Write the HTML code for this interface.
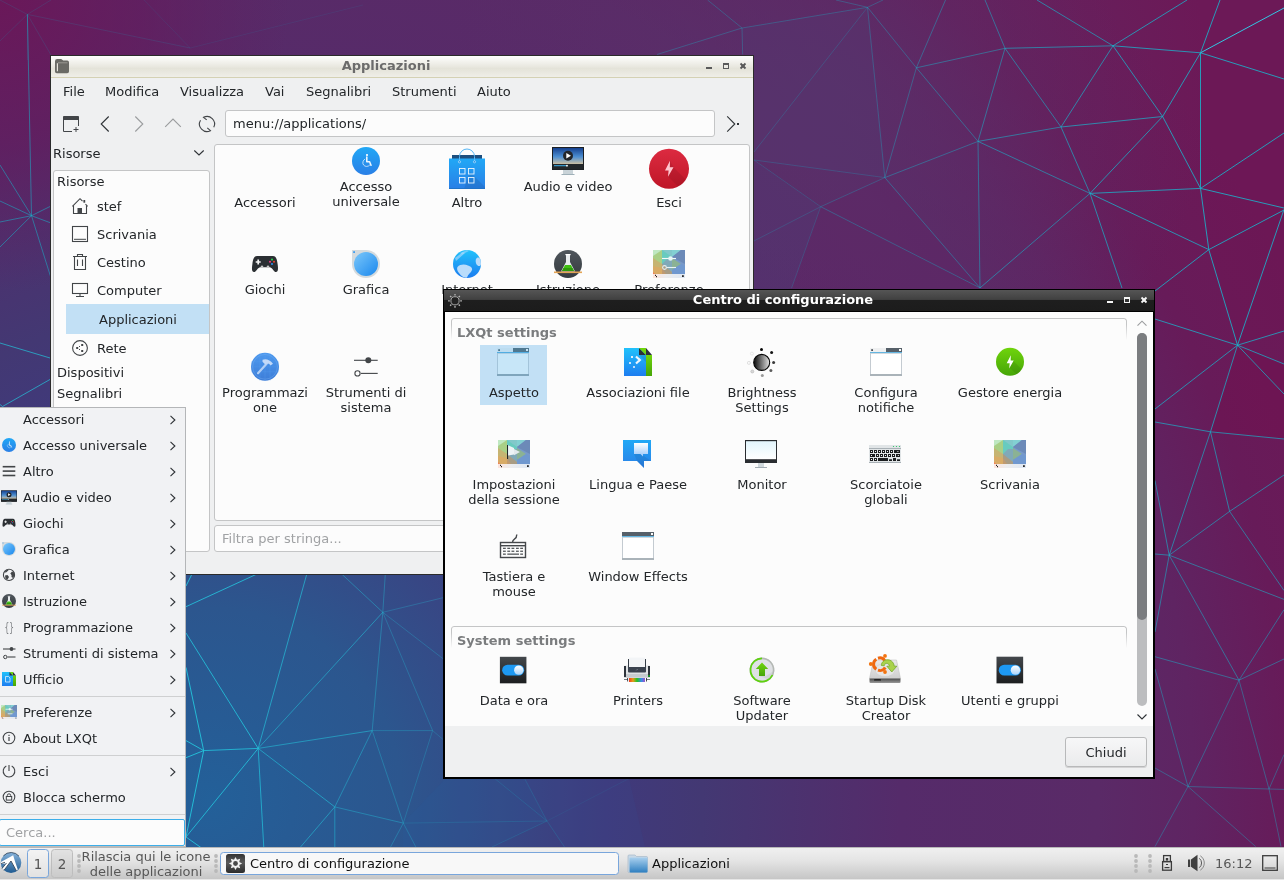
<!DOCTYPE html>
<html><head><meta charset="utf-8"><title>LXQt</title>
<style>
*{box-sizing:border-box;margin:0;padding:0}
html,body{width:1284px;height:880px;overflow:hidden}
body{font-family:"DejaVu Sans","Liberation Sans",sans-serif;font-size:13px;color:#232629;background:#5a2a66;position:relative}
svg{position:absolute;overflow:visible}
#wall{left:0;top:0;width:1284px;height:880px}
#w1,#w2,#menu,#panel{will-change:transform}
.t{position:absolute;white-space:nowrap;line-height:16px;height:16px}
.c{position:absolute;white-space:nowrap;line-height:15px;text-align:center;width:124px}
#w1{position:absolute;left:51px;top:56px;width:702px;height:518px;background:#eff0f1;overflow:hidden;outline:1px solid #2b2b2b}
#w1 .tb{position:absolute;left:0;top:0;width:100%;height:22px;background:linear-gradient(#fefefd,#e9e8e0 50%,#e4e3d9 60%,#efeee8);border-bottom:1px solid #d4d1b4}
#w1 .tt{position:absolute;left:0;top:2px;width:670px;text-align:center;font-weight:bold;color:#6b6b6b}
.pn{position:absolute;background:#fcfcfc;border:1px solid #c4c5c6;border-radius:3px}
#w2{position:absolute;left:443px;top:289px;width:712px;height:490px;background:#000}
#w2 .tb{position:absolute;left:1px;top:1px;width:710px;height:21px;background:linear-gradient(#555,#414141 45%,#1e1e1e 50%,#1c1c1c)}
#w2 .tt{position:absolute;left:0;top:2px;width:678px;text-align:center;font-weight:bold;color:#fff}
#w2 .body{position:absolute;left:2px;top:23px;width:708px;height:465px;background:#eff0f1}
#w2 .view{position:absolute;left:0;top:0;width:708px;height:414px;background:#fcfcfc}
.gb{position:absolute;left:6px;width:676px;height:22px;border:1px solid #c4c5c6;border-bottom:none;border-radius:3px 3px 0 0;-webkit-mask-image:linear-gradient(#000 30%,transparent);mask-image:linear-gradient(#000 30%,transparent)}
.gh{position:absolute;font-weight:bold;color:#7a7c7e;left:12px;line-height:16px}
#menu{position:absolute;left:0;top:407px;width:186px;height:440px;background:#f1f2f4;box-shadow:inset 0 1px 0 #b4b6b8,inset -1px 0 0 #b4b6b8,inset 0 -1px 0 #bdbcba}
.sep{position:absolute;left:0;width:185px;height:1px;background:#cfd0d1}
#panel{position:absolute;left:0;top:847px;width:1284px;height:33px;background:linear-gradient(#b8b8b8 0,#b8b8b8 1px,#f0f0f0 1px,#e4e4e4 14px,#c6c6c6 32px,#e6e6e6 32px)}
</style></head><body>
<svg id="wall" viewBox="0 0 1284 880">
<defs>
<radialGradient id="wb" cx="210" cy="800" r="1200" gradientUnits="userSpaceOnUse"><stop offset="0" stop-color="#236099"/><stop offset=".07" stop-color="#275b94"/><stop offset=".16" stop-color="#2c568e"/><stop offset=".24" stop-color="#364986"/><stop offset=".33" stop-color="#3f3a7c"/><stop offset=".41" stop-color="#433873"/><stop offset=".575" stop-color="#552b6a"/><stop offset=".74" stop-color="#5a2a67"/><stop offset=".82" stop-color="#5f2462"/><stop offset=".9" stop-color="#671b59"/><stop offset="1" stop-color="#6c1957"/></radialGradient>
<radialGradient id="wm" cx="0" cy="0" r="290" gradientUnits="userSpaceOnUse"><stop offset="0" stop-color="#6a1859"/><stop offset=".5" stop-color="#66195b" stop-opacity=".6"/><stop offset="1" stop-color="#621c5d" stop-opacity="0"/></radialGradient>
<radialGradient id="wp" cx="830" cy="90" r="380" gradientUnits="userSpaceOnUse"><stop offset="0" stop-color="#59316a" stop-opacity=".75"/><stop offset="1" stop-color="#59316a" stop-opacity="0"/></radialGradient>
</defs>
<rect width="1284" height="880" fill="url(#wb)"/>
<rect width="1284" height="880" fill="url(#wm)"/>
<rect width="1284" height="880" fill="url(#wp)"/>
<polygon points="445,779 524.6,778.5 547,821 492,847 403,847 403,823" fill="#2a5c9a" opacity=".22"/>
<polygon points="524.6,778.5 629,778.5 645,847 564.5,847 547,821" fill="#37488a" opacity=".25"/>
<polygon points="1237.5,345.2 1284,364 1284,439 1210.5,431.8" fill="#74104e" opacity=".4"/>
<polygon points="1200.5,52.8 1284,8 1284,133 1200.5,188.4" fill="#6e1655" opacity=".3"/>
<polygon points="1200.5,188.4 1284,133 1284,209.5 1208.8,249.6" fill="#6e1554" opacity=".25"/>
<polygon points="1208.8,249.6 1284,209.5 1284,331 1237.5,345.2" fill="#6e1453" opacity=".3"/>
<polygon points="742,28 867.5,7.3 884.8,177.6 754,160" fill="#523c74" opacity=".3"/>
<polygon points="884.8,177.6 980,287.9 820.7,206.7" fill="#632062" opacity=".3"/>
<polygon points="820.7,206.7 980,287.9 980,300 791.6,288" fill="#632062" opacity=".3"/>
<polygon points="754,160 820.7,206.7 791.6,288 750,300 750,160" fill="#4f3c76" opacity=".3"/>
<g stroke-width="1" fill="none">
<line x1="867.5" y1="7.3" x2="916.4" y2="67.8" stroke="#16bcd2" stroke-opacity="0.34"/>
<line x1="867.5" y1="7.3" x2="884.8" y2="177.6" stroke="#16bcd2" stroke-opacity="0.31"/>
<line x1="867.5" y1="7.3" x2="754" y2="152" stroke="#16bcd2" stroke-opacity="0.22"/>
<line x1="916.4" y1="67.8" x2="1005" y2="48.3" stroke="#16bcd2" stroke-opacity="0.44"/>
<line x1="916.4" y1="67.8" x2="884.8" y2="177.6" stroke="#16bcd2" stroke-opacity="0.35"/>
<line x1="916.4" y1="67.8" x2="978" y2="141.4" stroke="#16bcd2" stroke-opacity="0.42"/>
<line x1="916.4" y1="67.8" x2="945.5" y2="0" stroke="#16bcd2" stroke-opacity="0.4"/>
<line x1="1005" y1="48.3" x2="985" y2="0" stroke="#16bcd2" stroke-opacity="0.49"/>
<line x1="1005" y1="48.3" x2="1113" y2="45.8" stroke="#16bcd2" stroke-opacity="0.59"/>
<line x1="1005" y1="48.3" x2="978" y2="141.4" stroke="#16bcd2" stroke-opacity="0.49"/>
<line x1="1005" y1="48.3" x2="1061" y2="127" stroke="#16bcd2" stroke-opacity="0.55"/>
<line x1="1113" y1="45.8" x2="1037" y2="0" stroke="#16bcd2" stroke-opacity="0.61"/>
<line x1="1113" y1="45.8" x2="1187" y2="0" stroke="#16bcd2" stroke-opacity="0.73"/>
<line x1="1113" y1="45.8" x2="1200.5" y2="52.8" stroke="#16bcd2" stroke-opacity="0.74"/>
<line x1="1113" y1="45.8" x2="1061" y2="127" stroke="#16bcd2" stroke-opacity="0.63"/>
<line x1="1113" y1="45.8" x2="1162.6" y2="116.5" stroke="#16bcd2" stroke-opacity="0.71"/>
<line x1="1200.5" y1="52.8" x2="1220" y2="0" stroke="#16bcd2" stroke-opacity="0.8"/>
<line x1="1200.5" y1="52.8" x2="1284" y2="79" stroke="#16bcd2" stroke-opacity="0.8"/>
<line x1="1200.5" y1="52.8" x2="1162.6" y2="116.5" stroke="#16bcd2" stroke-opacity="0.77"/>
<line x1="1200.5" y1="52.8" x2="1200.5" y2="188.4" stroke="#16bcd2" stroke-opacity="0.8"/>
<line x1="978" y1="141.4" x2="1061" y2="127" stroke="#16bcd2" stroke-opacity="0.53"/>
<line x1="978" y1="141.4" x2="884.8" y2="177.6" stroke="#16bcd2" stroke-opacity="0.4"/>
<line x1="978" y1="141.4" x2="1090" y2="193.4" stroke="#16bcd2" stroke-opacity="0.55"/>
<line x1="978" y1="141.4" x2="980" y2="287.9" stroke="#16bcd2" stroke-opacity="0.47"/>
<line x1="1061" y1="127" x2="1162.6" y2="116.5" stroke="#16bcd2" stroke-opacity="0.67"/>
<line x1="1061" y1="127" x2="1090" y2="193.4" stroke="#16bcd2" stroke-opacity="0.61"/>
<line x1="1162.6" y1="116.5" x2="1090" y2="193.4" stroke="#16bcd2" stroke-opacity="0.69"/>
<line x1="1162.6" y1="116.5" x2="1200.5" y2="188.4" stroke="#16bcd2" stroke-opacity="0.77"/>
<line x1="884.8" y1="177.6" x2="820.7" y2="206.7" stroke="#16bcd2" stroke-opacity="0.28"/>
<line x1="884.8" y1="177.6" x2="980" y2="287.9" stroke="#16bcd2" stroke-opacity="0.4"/>
<line x1="884.8" y1="177.6" x2="754" y2="160" stroke="#16bcd2" stroke-opacity="0.23"/>
<line x1="1090" y1="193.4" x2="1200.5" y2="188.4" stroke="#16bcd2" stroke-opacity="0.72"/>
<line x1="1090" y1="193.4" x2="980" y2="287.9" stroke="#16bcd2" stroke-opacity="0.55"/>
<line x1="1090" y1="193.4" x2="1208.8" y2="249.6" stroke="#16bcd2" stroke-opacity="0.72"/>
<line x1="1090" y1="193.4" x2="1122" y2="288" stroke="#16bcd2" stroke-opacity="0.66"/>
<line x1="1200.5" y1="188.4" x2="1208.8" y2="249.6" stroke="#16bcd2" stroke-opacity="0.8"/>
<line x1="1200.5" y1="188.4" x2="1284" y2="133" stroke="#16bcd2" stroke-opacity="0.8"/>
<line x1="1200.5" y1="188.4" x2="1284" y2="208" stroke="#16bcd2" stroke-opacity="0.8"/>
<line x1="820.7" y1="206.7" x2="980" y2="287.9" stroke="#16bcd2" stroke-opacity="0.35"/>
<line x1="820.7" y1="206.7" x2="754" y2="160" stroke="#16bcd2" stroke-opacity="0.2"/>
<line x1="820.7" y1="206.7" x2="750" y2="243" stroke="#16bcd2" stroke-opacity="0.2"/>
<line x1="820.7" y1="206.7" x2="791.6" y2="288" stroke="#16bcd2" stroke-opacity="0.21"/>
<line x1="1208.8" y1="249.6" x2="1284" y2="210" stroke="#16bcd2" stroke-opacity="0.8"/>
<line x1="1208.8" y1="249.6" x2="1155" y2="291" stroke="#16bcd2" stroke-opacity="0.77"/>
<line x1="1208.8" y1="249.6" x2="1237.5" y2="345.2" stroke="#16bcd2" stroke-opacity="0.8"/>
<line x1="1237.5" y1="345.2" x2="1284" y2="209.5" stroke="#16bcd2" stroke-opacity="0.8"/>
<line x1="1200.5" y1="52.8" x2="1284" y2="8" stroke="#2fd0ea" stroke-opacity="0.95"/>
<line x1="867.5" y1="7.3" x2="742" y2="28" stroke="#16bcd2" stroke-opacity="0.3"/>
<line x1="867.5" y1="7.3" x2="836" y2="0" stroke="#16bcd2" stroke-opacity="0.3"/>
<line x1="867.5" y1="7.3" x2="883" y2="0" stroke="#16bcd2" stroke-opacity="0.3"/>
<line x1="742" y1="28" x2="707.6" y2="0" stroke="#16bcd2" stroke-opacity="0.3"/>
<line x1="742" y1="28" x2="657" y2="54.5" stroke="#16bcd2" stroke-opacity="0.3"/>
<line x1="742" y1="28" x2="742.7" y2="54.5" stroke="#16bcd2" stroke-opacity="0.3"/>
<line x1="27.4" y1="14.4" x2="190.2" y2="48" stroke="#2e7fa6" stroke-opacity="0.22"/>
<line x1="27.4" y1="14.4" x2="0" y2="0" stroke="#2e7fa6" stroke-opacity="0.22"/>
<line x1="27.4" y1="14.4" x2="51" y2="0" stroke="#2e7fa6" stroke-opacity="0.22"/>
<line x1="27.4" y1="14.4" x2="0" y2="41" stroke="#2e7fa6" stroke-opacity="0.22"/>
<line x1="27.4" y1="14.4" x2="27.4" y2="60" stroke="#2e7fa6" stroke-opacity="0.22"/>
<line x1="27.4" y1="14.4" x2="51" y2="55" stroke="#2e7fa6" stroke-opacity="0.22"/>
<line x1="190.2" y1="48" x2="144" y2="0" stroke="#2e7fa6" stroke-opacity="0.15"/>
<line x1="190.2" y1="48" x2="363" y2="5" stroke="#2e7fa6" stroke-opacity="0.15"/>
<line x1="31.5" y1="215.7" x2="27.4" y2="14.4" stroke="#16bcd2" stroke-opacity="0.5"/>
<line x1="31.5" y1="215.7" x2="51" y2="206" stroke="#16bcd2" stroke-opacity="0.5"/>
<line x1="31.5" y1="215.7" x2="51" y2="223" stroke="#16bcd2" stroke-opacity="0.5"/>
<line x1="31.5" y1="215.7" x2="51" y2="278" stroke="#16bcd2" stroke-opacity="0.5"/>
<line x1="31.5" y1="215.7" x2="0" y2="165" stroke="#16bcd2" stroke-opacity="0.5"/>
<line x1="31.5" y1="215.7" x2="0" y2="201" stroke="#16bcd2" stroke-opacity="0.5"/>
<line x1="31.5" y1="215.7" x2="0" y2="222" stroke="#16bcd2" stroke-opacity="0.5"/>
<line x1="31.5" y1="215.7" x2="0" y2="247" stroke="#16bcd2" stroke-opacity="0.5"/>
<line x1="0" y1="343" x2="51" y2="358.3" stroke="#24c4dc" stroke-opacity="0.7"/>
<line x1="2.5" y1="406.5" x2="51" y2="378.9" stroke="#24c4dc" stroke-opacity="0.7"/>
<line x1="2.5" y1="406.5" x2="0" y2="404.5" stroke="#24c4dc" stroke-opacity="0.7"/>
<line x1="1237.5" y1="345.2" x2="1284" y2="331" stroke="#16bcd2" stroke-opacity="0.72"/>
<line x1="1237.5" y1="345.2" x2="1284" y2="364" stroke="#16bcd2" stroke-opacity="0.71"/>
<line x1="1237.5" y1="345.2" x2="1284" y2="394" stroke="#16bcd2" stroke-opacity="0.69"/>
<line x1="1237.5" y1="345.2" x2="1155" y2="319" stroke="#16bcd2" stroke-opacity="0.72"/>
<line x1="1237.5" y1="345.2" x2="1155" y2="409" stroke="#16bcd2" stroke-opacity="0.69"/>
<line x1="1237.5" y1="345.2" x2="1210.5" y2="431.8" stroke="#16bcd2" stroke-opacity="0.68"/>
<line x1="1210.5" y1="431.8" x2="1155" y2="422" stroke="#16bcd2" stroke-opacity="0.65"/>
<line x1="1210.5" y1="431.8" x2="1284" y2="439" stroke="#16bcd2" stroke-opacity="0.64"/>
<line x1="1210.5" y1="431.8" x2="1229.6" y2="511.4" stroke="#16bcd2" stroke-opacity="0.61"/>
<line x1="1210.5" y1="431.8" x2="1169.2" y2="555.2" stroke="#16bcd2" stroke-opacity="0.6"/>
<line x1="1229.6" y1="511.4" x2="1284" y2="475" stroke="#16bcd2" stroke-opacity="0.6"/>
<line x1="1229.6" y1="511.4" x2="1169.2" y2="555.2" stroke="#16bcd2" stroke-opacity="0.56"/>
<line x1="1229.6" y1="511.4" x2="1284" y2="590.5" stroke="#16bcd2" stroke-opacity="0.55"/>
<line x1="1169.2" y1="555.2" x2="1155" y2="480.5" stroke="#16bcd2" stroke-opacity="0.58"/>
<line x1="1169.2" y1="555.2" x2="1155" y2="554" stroke="#16bcd2" stroke-opacity="0.55"/>
<line x1="1169.2" y1="555.2" x2="1284" y2="599.4" stroke="#16bcd2" stroke-opacity="0.53"/>
<line x1="1169.2" y1="555.2" x2="1239" y2="680.2" stroke="#16bcd2" stroke-opacity="0.5"/>
<line x1="1169.2" y1="555.2" x2="1155" y2="632" stroke="#16bcd2" stroke-opacity="0.52"/>
<line x1="1239" y1="680.2" x2="1284" y2="609.7" stroke="#16bcd2" stroke-opacity="0.47"/>
<line x1="1239" y1="680.2" x2="1284" y2="659" stroke="#16bcd2" stroke-opacity="0.45"/>
<line x1="1239" y1="680.2" x2="1155" y2="656.7" stroke="#16bcd2" stroke-opacity="0.46"/>
<line x1="1239" y1="680.2" x2="1188" y2="786.5" stroke="#16bcd2" stroke-opacity="0.4"/>
<line x1="1239" y1="680.2" x2="1269" y2="789" stroke="#16bcd2" stroke-opacity="0.4"/>
<line x1="1188" y1="786.5" x2="1155" y2="768" stroke="#16bcd2" stroke-opacity="0.37"/>
<line x1="1188" y1="786.5" x2="1155" y2="669" stroke="#16bcd2" stroke-opacity="0.41"/>
<line x1="1188" y1="786.5" x2="1269" y2="789" stroke="#16bcd2" stroke-opacity="0.36"/>
<line x1="1188" y1="786.5" x2="1155" y2="846.6" stroke="#16bcd2" stroke-opacity="0.35"/>
<line x1="1188" y1="786.5" x2="1255.7" y2="846.6" stroke="#16bcd2" stroke-opacity="0.35"/>
<line x1="1269" y1="789" x2="1284" y2="789.4" stroke="#16bcd2" stroke-opacity="0.36"/>
<line x1="1269" y1="789" x2="1284" y2="754.6" stroke="#16bcd2" stroke-opacity="0.37"/>
<line x1="1269" y1="789" x2="1281" y2="846.6" stroke="#16bcd2" stroke-opacity="0.35"/>
<line x1="258.2" y1="748.4" x2="203.7" y2="750.6" stroke="#24c4dc" stroke-opacity="0.81"/>
<line x1="258.2" y1="748.4" x2="186" y2="633" stroke="#24c4dc" stroke-opacity="0.83"/>
<line x1="258.2" y1="748.4" x2="306.8" y2="574" stroke="#24c4dc" stroke-opacity="0.66"/>
<line x1="258.2" y1="748.4" x2="382.8" y2="612.3" stroke="#24c4dc" stroke-opacity="0.54"/>
<line x1="258.2" y1="748.4" x2="372.2" y2="730.6" stroke="#24c4dc" stroke-opacity="0.56"/>
<line x1="258.2" y1="748.4" x2="334.8" y2="806.9" stroke="#24c4dc" stroke-opacity="0.61"/>
<line x1="258.2" y1="748.4" x2="263.8" y2="848" stroke="#24c4dc" stroke-opacity="0.72"/>
<line x1="258.2" y1="748.4" x2="186" y2="837" stroke="#24c4dc" stroke-opacity="0.83"/>
<line x1="203.7" y1="750.6" x2="186" y2="667.4" stroke="#24c4dc" stroke-opacity="0.9"/>
<line x1="203.7" y1="750.6" x2="186" y2="740.6" stroke="#24c4dc" stroke-opacity="0.9"/>
<line x1="203.7" y1="750.6" x2="186" y2="757.7" stroke="#24c4dc" stroke-opacity="0.9"/>
<line x1="203.7" y1="750.6" x2="186" y2="837" stroke="#24c4dc" stroke-opacity="0.9"/>
<line x1="186" y1="606.7" x2="257" y2="574" stroke="#24c4dc" stroke-opacity="0.84"/>
<line x1="186" y1="586" x2="192" y2="574" stroke="#24c4dc" stroke-opacity="0.9"/>
<line x1="382.8" y1="612.3" x2="341.7" y2="574" stroke="#24c4dc" stroke-opacity="0.42"/>
<line x1="382.8" y1="612.3" x2="385.3" y2="574" stroke="#24c4dc" stroke-opacity="0.36"/>
<line x1="382.8" y1="612.3" x2="372.2" y2="730.6" stroke="#24c4dc" stroke-opacity="0.38"/>
<line x1="382.8" y1="612.3" x2="432.6" y2="730.6" stroke="#24c4dc" stroke-opacity="0.29"/>
<line x1="382.8" y1="612.3" x2="446" y2="597" stroke="#24c4dc" stroke-opacity="0.27"/>
<line x1="382.8" y1="612.3" x2="446" y2="661" stroke="#24c4dc" stroke-opacity="0.27"/>
<line x1="372.2" y1="730.6" x2="432.6" y2="730.6" stroke="#24c4dc" stroke-opacity="0.3"/>
<line x1="372.2" y1="730.6" x2="334.8" y2="806.9" stroke="#24c4dc" stroke-opacity="0.45"/>
<line x1="372.2" y1="730.6" x2="403.3" y2="823.1" stroke="#24c4dc" stroke-opacity="0.34"/>
<line x1="334.8" y1="806.9" x2="403.3" y2="823.1" stroke="#24c4dc" stroke-opacity="0.4"/>
<line x1="334.8" y1="806.9" x2="299.7" y2="848" stroke="#24c4dc" stroke-opacity="0.55"/>
<line x1="334.8" y1="806.9" x2="334.8" y2="848" stroke="#24c4dc" stroke-opacity="0.5"/>
<line x1="403.3" y1="823.1" x2="432.6" y2="730.6" stroke="#24c4dc" stroke-opacity="0.26"/>
<line x1="403.3" y1="823.1" x2="390" y2="848" stroke="#24c4dc" stroke-opacity="0.32"/>
<line x1="403.3" y1="823.1" x2="416.4" y2="848" stroke="#24c4dc" stroke-opacity="0.28"/>
<line x1="432.6" y1="730.6" x2="446" y2="742" stroke="#24c4dc" stroke-opacity="0.22"/>
<line x1="186" y1="837" x2="201.6" y2="848" stroke="#24c4dc" stroke-opacity="0.9"/>
<line x1="547" y1="821" x2="403.3" y2="823.1" stroke="#2590b4" stroke-opacity="0.3"/>
<line x1="547" y1="821" x2="494.7" y2="778.5" stroke="#2590b4" stroke-opacity="0.3"/>
<line x1="547" y1="821" x2="524.6" y2="778.5" stroke="#2590b4" stroke-opacity="0.3"/>
<line x1="547" y1="821" x2="492" y2="847" stroke="#2590b4" stroke-opacity="0.3"/>
<line x1="547" y1="821" x2="564.5" y2="847" stroke="#2590b4" stroke-opacity="0.3"/>
<line x1="547" y1="821" x2="629" y2="778.5" stroke="#2590b4" stroke-opacity="0.12"/>
</g></svg>
<svg style="width:0;height:0;left:0;top:0" aria-hidden="true"><defs>
<linearGradient id="gBlue" x1="0" y1="0" x2="0" y2="1"><stop offset="0" stop-color="#21a8f6"/><stop offset="1" stop-color="#2a7fe6"/></linearGradient>
<linearGradient id="gBlue2" x1="0" y1="0" x2="0" y2="1"><stop offset="0" stop-color="#21c2fb"/><stop offset="1" stop-color="#1d7df0"/></linearGradient>
<linearGradient id="gRed" x1="0" y1="0" x2="0" y2="1"><stop offset="0" stop-color="#dc2b41"/><stop offset="1" stop-color="#bf1627"/></linearGradient>
<linearGradient id="gGreen" x1="0" y1="0" x2="0" y2="1"><stop offset="0" stop-color="#6fd40c"/><stop offset="1" stop-color="#46a507"/></linearGradient>
<linearGradient id="gDark" x1="0" y1="0" x2="0" y2="1"><stop offset="0" stop-color="#4f565c"/><stop offset="1" stop-color="#363b40"/></linearGradient>
<linearGradient id="gTog" x1="0" y1="0" x2="0" y2="1"><stop offset="0" stop-color="#43474b"/><stop offset="1" stop-color="#1c1e20"/></linearGradient>
<linearGradient id="gKnob" x1="0" y1="0" x2="0" y2="1"><stop offset="0" stop-color="#ffffff"/><stop offset="1" stop-color="#a9d4fb"/></linearGradient>
<linearGradient id="gProg" x1="0" y1="0" x2="0" y2="1"><stop offset="0" stop-color="#4d99ee"/><stop offset="1" stop-color="#3d7dd8"/></linearGradient>
<linearGradient id="gSky" x1="0" y1="0" x2="0" y2="1"><stop offset="0" stop-color="#15418f"/><stop offset=".55" stop-color="#4d8fd2"/><stop offset="1" stop-color="#cbbfa4"/></linearGradient>
<linearGradient id="gScr" x1="0" y1="0" x2="0" y2="1"><stop offset="0" stop-color="#e2f5fc"/><stop offset="1" stop-color="#ffffff"/></linearGradient>
<linearGradient id="gBri" x1="0" y1="0" x2="1" y2="0"><stop offset="0" stop-color="#0a0a0a"/><stop offset="1" stop-color="#e4e4e4"/></linearGradient>
<linearGradient id="gBub" x1="0" y1="0" x2="0" y2="1"><stop offset="0" stop-color="#ffffff"/><stop offset="1" stop-color="#9cc8fa"/></linearGradient>
<linearGradient id="gRain" x1="0" y1="0" x2="1" y2="0"><stop offset="0" stop-color="#f03a1c"/><stop offset=".25" stop-color="#e89a18"/><stop offset=".5" stop-color="#22c322"/><stop offset=".78" stop-color="#3a8ae8"/><stop offset="1" stop-color="#a050c8"/></linearGradient>
<linearGradient id="gPan" x1="0" y1="0" x2="1" y2="0"><stop offset="0" stop-color="#fde4dc"/><stop offset=".4" stop-color="#ececee"/><stop offset="1" stop-color="#dfe8f3"/></linearGradient>
<linearGradient id="gGraf" x1="0" y1="0" x2="1" y2="1"><stop offset="0" stop-color="#7cc8fa"/><stop offset="1" stop-color="#1a88ee"/></linearGradient>
<linearGradient id="gLogo" x1="0" y1="0" x2="0" y2="1"><stop offset="0" stop-color="#86b2da"/><stop offset="1" stop-color="#1f5b92"/></linearGradient>
<linearGradient id="gHd" x1="0" y1="0" x2="0" y2="1"><stop offset="0" stop-color="#e9e9e9"/><stop offset="1" stop-color="#cfcfcf"/></linearGradient>
<linearGradient id="gHf" x1="0" y1="0" x2="0" y2="1"><stop offset="0" stop-color="#4a4a4a"/><stop offset="1" stop-color="#9a9a9a"/></linearGradient>
<linearGradient id="gFold" x1="0" y1="0" x2="0" y2="1"><stop offset="0" stop-color="#a9d0ee"/><stop offset="1" stop-color="#2e7fc0"/></linearGradient>
<linearGradient id="gGearBg" x1="0" y1="0" x2="0" y2="1"><stop offset="0" stop-color="#333"/><stop offset=".45" stop-color="#5a5a5a"/><stop offset="1" stop-color="#2c2c2c"/></linearGradient>
<filter id="soft" x="-5%" y="-5%" width="110%" height="110%"><feGaussianBlur stdDeviation=".45"/></filter>
<clipPath id="dclip"><rect width="32" height="24"/></clipPath>
<g id="deskimg" clip-path="url(#dclip)"><g filter="url(#soft)"><rect x="-2" y="-2" width="36" height="28" fill="#7aa0c8"/>
<rect width="32" height="24" fill="#7aa0c8"/>
<polygon points="0,0 9,0 9,24 0,24" fill="#a9cf86"/>
<polygon points="0,0 9,0 0,6" fill="#bfe8c2"/>
<polygon points="0,8 9,14 9,24 0,24" fill="#c6b472"/>
<polygon points="0,16 9,18 9,24 0,24" fill="#d8ab66"/>
<polygon points="0,22 2,24 0,24" fill="#f08058"/>
<polygon points="9,0 19,0 19,24 9,24" fill="#68cbbf"/>
<polygon points="9,0 19,0 19,7" fill="#82c8ca"/>
<polygon points="9,14 14,9 19,9 19,24 9,24" fill="#80a9b8"/>
<polygon points="9,14 19,22 19,24 9,24" fill="#a89c84"/>
<polygon points="9,18 13,24 9,24" fill="#c09a70"/>
<polygon points="19,0 32,0 32,24 19,24" fill="#7899c9"/>
<polygon points="19,0 28,0 19,7" fill="#82d0d2"/>
<polygon points="28,0 32,0 32,14 19,7" fill="#6c8ab8"/>
<polygon points="19,8 28,14 19,20" fill="#8bb294"/>
<polygon points="19,20 28,14 32,16 32,24 19,24" fill="#7098cf"/>
</g></g>
<g id="deskpanel"><rect y="24" width="32" height="4" fill="url(#gPan)"/><path d="M2,25 L4,27 M2,25.2 h.8 M4,26.8 h-.8" stroke="#222" stroke-width="1" fill="none"/><rect x="29" y="25.2" width="1.8" height="1.8" fill="#2a2a2a"/></g>
<g id="toggle"><rect width="26" height="26" fill="url(#gTog)"/><rect x="2.2" y="7.8" width="21.6" height="10.6" rx="5.3" fill="#1d99f3"/><circle cx="18.5" cy="13.1" r="4.6" fill="url(#gKnob)"/></g>
<g id="winicon"><rect x="0" y="0" width="32" height="4" fill="#566069"/><rect x="29" y="1" width="2" height="2" fill="#fcfcfc"/><rect x="0" y="4" width="32" height="1.2" fill="#3daee9"/><rect x="0.5" y="5.2" width="31" height="21.3" fill="#fff" stroke="#c4cbd1" stroke-width="1"/><rect x="0" y="26" width="32" height="2" fill="#aab3b9"/></g>
</defs></svg>
<div id="w1"><div class="tb"><div class="tt">Applicazioni</div></div>
<div class="t" style="left:12px;top:28px;">File</div>
<div class="t" style="left:54px;top:28px;">Modifica</div>
<div class="t" style="left:129px;top:28px;">Visualizza</div>
<div class="t" style="left:214px;top:28px;">Vai</div>
<div class="t" style="left:255px;top:28px;">Segnalibri</div>
<div class="t" style="left:341px;top:28px;">Strumenti</div>
<div class="t" style="left:426px;top:28px;">Aiuto</div>
<div class="pn" style="left:174px;top:54px;width:490px;height:27px"></div>
<div class="t" style="left:182px;top:60px;">menu://applications/</div>
<div class="t" style="left:2px;top:90px;">Risorse</div>
<div class="pn" style="left:2px;top:114px;width:157px;height:382px"></div>
<div style="position:absolute;left:15px;top:248px;width:143px;height:30px;background:#c2e0f5"></div>
<div class="t" style="left:6px;top:118px;">Risorse</div>
<div class="t" style="left:46px;top:143px;">stef</div>
<div class="t" style="left:46px;top:171px;">Scrivania</div>
<div class="t" style="left:46px;top:199px;">Cestino</div>
<div class="t" style="left:46px;top:227px;">Computer</div>
<div class="t" style="left:48px;top:256px;">Applicazioni</div>
<div class="t" style="left:46px;top:285px;">Rete</div>
<div class="t" style="left:6px;top:309px;">Dispositivi</div>
<div class="t" style="left:6px;top:330px;">Segnalibri</div>
<div class="pn" style="left:163px;top:88px;width:536px;height:377px"></div>
<div class="pn" style="left:163px;top:469px;width:536px;height:27px"></div>
<div class="t" style="left:171px;top:475px;color:#a0a2a4">Filtra per stringa...</div>
<div class="c" style="left:152px;top:139px">Accessori</div>
<div class="c" style="left:253px;top:123px">Accesso</div>
<div class="c" style="left:253px;top:138px">universale</div>
<div class="c" style="left:354px;top:139px">Altro</div>
<div class="c" style="left:455px;top:123px">Audio e video</div>
<div class="c" style="left:556px;top:139px">Esci</div>
<div class="c" style="left:152px;top:226px">Giochi</div>
<div class="c" style="left:253px;top:226px">Grafica</div>
<div class="c" style="left:354px;top:226px">Internet</div>
<div class="c" style="left:455px;top:226px">Istruzione</div>
<div class="c" style="left:556px;top:226px">Preferenze</div>
<div class="c" style="left:152px;top:329px">Programmazi</div>
<div class="c" style="left:152px;top:344px">one</div>
<div class="c" style="left:253px;top:329px">Strumenti di</div>
<div class="c" style="left:253px;top:344px">sistema</div>
<svg style="left:-51px;top:-56px;width:1284px;height:880px" viewBox="0 0 1284 880"><path d="M55,61.200 a2.200,2.200 0 0 1 2.200,-2.200 h4 l2,1.600 h4 a1.800,1.800 0 0 1 1.800,1.800 v9 a1.800,1.800 0 0 1 -1.800,1.800 h-10.400 a1.800,1.800 0 0 1 -1.800,-1.800Z" fill="#6a6a65"/><path d="M57.400,71.300 V63.200" fill="none" stroke="#eceae2" stroke-width="1.100"/><path d="M58,62.800 H67.500" stroke="#eceae2" stroke-width=".8" opacity=".45"/>
<rect x="706" y="67" width="6" height="2" fill="#5a5a5a"/>
<rect x="723" y="63" width="6" height="6" fill="#5a5a5a"/><rect x="724" y="65" width="4" height="3" fill="#ecebe4"/>
<path d="M740.5,63.5 L745.5,68.5 M745.5,63.5 L740.5,68.5" stroke="#5a5a5a" stroke-width="1.8"/><rect x="741.5" y="64.5" width="3" height="3" fill="#5a5a5a"/>
<path d="M63.5,116.5 h15 v3 h-15Z" fill="#424548" stroke="#424548"/><path d="M63.5,119 V131.5 H72 M78.500,119 V126" fill="none" stroke="#424548"/><path d="M73.5,129.500 h5 M76,127 v5" stroke="#424548" stroke-width="1"/>
<path d="M108.7,116.5 L101.2,124 L108.7,131.5" fill="none" stroke="#2e3236" stroke-width="1.1"/>
<path d="M135.3,116.5 L142.8,124 L135.3,131.5" fill="none" stroke="#9a9c9e" stroke-width="1.1"/>
<path d="M165.200,126.800 L173,119 L180.800,126.800" fill="none" stroke="#9a9c9e" stroke-width="1.1"/>
<g fill="none" stroke="#424548" stroke-width="1.100"><path d="M206.700,119.900 L203.530,117.350 A7.500,7.500 0 0 1 213.750,127.280"/><path d="M207.300,127.800 L210.430,130.670 A7.500,7.500 0 0 1 200.510,120.240"/></g>
<path d="M727.2,116.300 L734.8,124 L727.2,131.700" fill="none" stroke="#2e3236" stroke-width="1.1"/><rect x="737" y="123" width="2" height="2" fill="#2e3236"/>
<path d="M194.300,150.500 L199,155 L203.700,150.500" fill="none" stroke="#2e3236" stroke-width="1.1"/>
<g fill="none" stroke="#424548" stroke-width="1.1"><path d="M72.400,206.300 L80,198.700 L82.500,201.200 M85.500,204.200 L87.600,206.300"/><path d="M73.500,205.500 V213.500 H86.500 V205.500"/></g><rect x="77.500" y="208" width="4.500" height="5.500" fill="#424548"/><rect x="83.400" y="200" width="1.800" height="2.700" fill="#424548"/>
<rect x="72.500" y="226.500" width="15" height="15" fill="none" stroke="#424548" stroke-width="1.1"/><path d="M74,239.300 h12" stroke="#424548" stroke-width="1"/>
<g fill="none" stroke="#424548" stroke-width="1.1"><path d="M73,256.500 h14 M77.500,256.500 v-2 h5 v2"/><path d="M74.500,256.500 V269.500 H85.500 V256.500"/><path d="M77.500,259.500 v6.500 M82.500,259.500 v6.500"/></g>
<g fill="none" stroke="#424548" stroke-width="1.1"><rect x="72.500" y="283.500" width="15" height="10"/><path d="M80,293.500 v3 M76,296.500 h8"/></g>
<circle cx="80" cy="348" r="7.400" fill="none" stroke="#424548" stroke-width="1.1"/><g fill="#424548"><rect x="81.200" y="344" width="2" height="2"/><rect x="76.200" y="347" width="2" height="2"/><rect x="81.200" y="350" width="2" height="2"/><rect x="79" y="346" width="1" height="1"/><rect x="79" y="349" width="1" height="1"/></g>
<g transform="translate(366,161) scale(1.0)"><circle r="14" fill="url(#gBlue)"/><circle cx="1" cy="-6" r="1.100" fill="#fff"/><path d="M0.800,-4 V0.800 H3.600 L5,4.200" fill="none" stroke="#eaf5fe" stroke-width="1.600" stroke-linecap="round" stroke-linejoin="round"/><path d="M-1.200,-1.800 A3.900,3.900 0 1 0 3.600,4.200" fill="none" stroke="#fff" stroke-width=".9" stroke-linecap="round" opacity=".75"/></g>
<rect x="452" y="155" width="30" height="4" fill="#1d4f7f"/><rect x="449" y="158.500" width="36" height="30.300" fill="url(#gBlue)"/><path d="M470,172 L485,187 V188.800 H464Z" fill="#000" opacity=".08"/><rect x="449" y="188" width="36" height=".9" fill="#1b6fc6"/><path d="M459.500,161.500 V156.500 A7.500,7.500 0 0 1 474.500,156.500 V161.500" fill="none" stroke="#55b6f5" stroke-width="1"/><circle cx="459.500" cy="161.800" r="1.100" fill="#1d8fe8" stroke="#d5ecfd" stroke-width=".6"/><circle cx="474.500" cy="161.800" r="1.100" fill="#1d8fe8" stroke="#d5ecfd" stroke-width=".6"/><g fill="none" stroke="#eaf5fe" stroke-width=".9"><rect x="459.500" y="168.500" width="5.500" height="5.500"/><rect x="468.500" y="168.500" width="5.500" height="5.500"/><rect x="459.500" y="177.500" width="5.500" height="5.500"/><rect x="468.500" y="177.500" width="5.500" height="5.500"/></g>
<g transform="translate(552,147) scale(1)"><rect width="32" height="23" fill="#1c1f22"/><rect x="1" y="1" width="30" height="16" fill="url(#gSky)"/><rect x="1" y="17" width="30" height="5.5" fill="#23272b"/><rect x="2" y="18.2" width="13" height="1" fill="#3daee9"/><circle cx="15" cy="18.7" r=".9" fill="#fff"/><circle cx="16" cy="8.8" r="5" fill="#23262a"/><path d="M14.3,6 L19,8.8 L14.3,11.6Z" fill="#fff"/><rect x="11" y="23" width="10" height="4" fill="#c9d3d8"/><rect x="9.5" y="27" width="13" height="1" fill="#9fb0b8"/></g>
<g transform="translate(669,168.8) scale(1.0)"><circle r="20" fill="url(#gRed)"/><clipPath id="bc"><circle r="20"/></clipPath><path d="M1,-8 L4.5,-1.500 L24,18 L18,26 L-1,8Z" fill="#000" opacity=".08" clip-path="url(#bc)"/><path transform="scale(1)" d="M1,-8 L-4,1.700 H-0.400 L-1,8 L4.500,-1.500 H0.800Z" fill="#ffc6cf"/></g>
<g transform="translate(252,256) scale(1)"><path d="M5,0 H21 C24,0 25,3 25.6,8 C26.2,12 26.5,16 24,16 C22,16 20.5,12 18,11.2 H8 C5.5,12 4,16 2,16 C-0.5,16 -0.2,12 0.4,8 C1,3 2,0 5,0Z" fill="#2b2f33"/><path d="M3.700,6 h5 M6.200,3.500 v5" stroke="#f4f4f4" stroke-width="1.700"/><circle cx="20" cy="3.6" r="1.05" fill="#2ecc50"/><circle cx="18" cy="5.8" r="1.05" fill="#e83e8c"/><circle cx="22" cy="5.8" r="1.05" fill="#e8412c"/><circle cx="20" cy="8" r="1.05" fill="#2d8ef0"/><circle cx="10" cy="10.6" r="1.2" fill="#c8c8c8"/><circle cx="16" cy="10.6" r="1.2" fill="#c8c8c8"/></g>
<g transform="translate(366,264) scale(1.0)"><path d="M-14,-14 H0 A14,14 0 1 1 -14,0Z" fill="#d4dadd"/><circle r="12" fill="url(#gGraf)"/><rect x="-12.8" y="-12.8" width="1.8" height="1.8" fill="#3d9df0"/></g>
<g transform="translate(467,264) scale(1.0)"><circle r="14" fill="url(#gBlue2)"/><clipPath id="gc"><circle r="14"/></clipPath><g clip-path="url(#gc)" fill="#b9dcfb"><path d="M-9.500,3 C-7,0 -2,0 1,1.500 C4,2.500 5.500,4 5,6 C4,9 1,10 0,13.500 C-3,14.500 -6,12 -8,9 C-9.500,7 -10.500,5 -9.500,3Z"/><path d="M9,-5 C10,-7.500 13,-7 14,-4 C15,-1 14,2 12,2 C9.500,2 8,-2 9,-5Z"/><path d="M-12,-6 L-4,-12 L-2,-11 L-11,-3Z" opacity=".6"/><path d="M-7,-11 L0,-14 L2,-13 L-5,-9.5Z" opacity=".5"/></g></g>
<g transform="translate(568,264) scale(1.0)"><circle r="14" fill="url(#gDark)"/><path d="M-2,-9 H2 V-2 L7,7.5 H-7 L-2,-2Z" fill="#e8ecee"/><path d="M-2.6,-9.4 h5.2" stroke="#fff" stroke-width="1.2"/><path d="M-3,1 H3 L6,7 H-6Z" fill="#3fc011"/><path d="M-4.5,4 H4.5 L6,7 H-6Z" fill="#2f9a0c"/><rect x="-14" y="7.5" width="28" height="1.6" fill="#e3a355"/></g>
<g transform="translate(653,250) scale(1)"><use href="#deskimg"/><path d="M9,8.500 h14" stroke="#f2fafa" stroke-width="1.100"/><circle cx="17.500" cy="8.500" r="2.300" fill="#e6f5f5"/><path d="M13.500,17.500 h9.500" stroke="#e8f2f4" stroke-width="1.100"/><circle cx="11.500" cy="17.500" r="1.900" fill="none" stroke="#e4eef0" stroke-width="1.100"/><use href="#deskpanel"/></g>
<g transform="translate(265,366.8) scale(1.0)"><circle r="14" fill="url(#gProg)"/><g stroke="#5aa2f0" stroke-width=".5" opacity=".5"><path d="M-14,-5 H14 M-14,0 H14 M-14,5 H14 M-5,-14 V14 M0,-14 V14 M5,-14 V14"/></g><circle r="12.400" fill="none" stroke="#7ab4f4" stroke-width=".6" opacity=".6"/><path d="M-7,6.500 L2.500,-4" stroke="#b2cff5" stroke-width="2.200" stroke-linecap="round"/><path d="M-2.5,-7 C1,-8.5 5,-7 8,-3 L5.5,-1.2 C4.5,-2.8 3.5,-3.5 2,-3.5 L0.5,-2 L-2.5,-5Z" fill="#c2d9f8"/></g>
<path d="M354,360.300 h23.700" stroke="#424548" stroke-width="1.100"/><circle cx="368.300" cy="360.300" r="3" fill="#424548"/><path d="M361,373.400 h16.700" stroke="#424548" stroke-width="1.100"/><circle cx="357.500" cy="373.400" r="2.600" fill="#fcfcfc" stroke="#424548" stroke-width="1.100"/></svg>
</div>
<div id="w2"><div class="tb"><div class="tt">Centro di configurazione</div></div><svg style="left:-443px;top:-289px;width:1284px;height:880px" viewBox="0 0 1284 880"><g transform="translate(455,300.800)"><g stroke="#b8b8b8" stroke-width="1.300"><path d="M0,-5.200 V-6.900" transform="rotate(0)"/><path d="M0,-5.200 V-6.900" transform="rotate(45)"/><path d="M0,-5.200 V-6.900" transform="rotate(90)"/><path d="M0,-5.200 V-6.900" transform="rotate(135)"/><path d="M0,-5.200 V-6.900" transform="rotate(180)"/><path d="M0,-5.200 V-6.900" transform="rotate(225)"/><path d="M0,-5.200 V-6.900" transform="rotate(270)"/><path d="M0,-5.200 V-6.900" transform="rotate(315)"/></g><circle r="4.100" fill="#222" stroke="#a8a8a8" stroke-width="1"/></g>
<rect x="1107" y="301" width="6" height="2" fill="#f4f4f4"/><rect x="1124" y="297" width="6" height="6" fill="#f4f4f4"/><rect x="1125" y="299" width="4" height="3" fill="#333"/><path d="M1141.500,297.500 L1146.500,302.500 M1146.500,297.500 L1141.500,302.500" stroke="#f4f4f4" stroke-width="1.800"/><rect x="1142.500" y="298.500" width="3" height="3" fill="#f4f4f4"/></svg><div class="body"><div class="view">
<div class="gb" style="top:6px"></div><div class="gh" style="top:13px">LXQt settings</div>
<div class="gb" style="top:314px"></div><div class="gh" style="top:321px">System settings</div>
<div style="position:absolute;left:35px;top:33px;width:67px;height:60px;background:#c2e0f5"></div>
<div class="c" style="left:7px;top:73px">Aspetto</div>
<div class="c" style="left:131px;top:73px">Associazioni file</div>
<div class="c" style="left:255px;top:73px">Brightness</div>
<div class="c" style="left:255px;top:88px">Settings</div>
<div class="c" style="left:379px;top:73px">Configura</div>
<div class="c" style="left:379px;top:88px">notifiche</div>
<div class="c" style="left:503px;top:73px">Gestore energia</div>
<div class="c" style="left:7px;top:165px">Impostazioni</div>
<div class="c" style="left:7px;top:180px">della sessione</div>
<div class="c" style="left:131px;top:165px">Lingua e Paese</div>
<div class="c" style="left:255px;top:165px">Monitor</div>
<div class="c" style="left:379px;top:165px">Scorciatoie</div>
<div class="c" style="left:379px;top:180px">globali</div>
<div class="c" style="left:503px;top:165px">Scrivania</div>
<div class="c" style="left:7px;top:257px">Tastiera e</div>
<div class="c" style="left:7px;top:272px">mouse</div>
<div class="c" style="left:131px;top:257px">Window Effects</div>
<div class="c" style="left:7px;top:381px">Data e ora</div>
<div class="c" style="left:131px;top:381px">Printers</div>
<div class="c" style="left:255px;top:381px">Software</div>
<div class="c" style="left:255px;top:396px">Updater</div>
<div class="c" style="left:379px;top:381px">Startup Disk</div>
<div class="c" style="left:379px;top:396px">Creator</div>
<div class="c" style="left:503px;top:381px">Utenti e gruppi</div>
<div style="position:absolute;left:692px;top:21px;width:10px;height:373px;border-radius:5px;background:#bcbdbf"></div>
<div style="position:absolute;left:692px;top:21px;width:10px;height:287px;border-radius:5px;background:#7b7d80"></div>
<svg style="left:-445px;top:-312px;width:1284px;height:880px" viewBox="0 0 1284 880"><g transform="translate(497,348)"><rect width="16" height="4" fill="#bcdcf0"/><rect x="16" width="16" height="4" fill="#4f7890"/><rect x="1.200" y="1.200" width="1.800" height="1.800" fill="#4f7890"/><rect x="29" y="1" width="2" height="2" fill="#c8e4f6"/><rect y="4" width="32" height="1.200" fill="#2ea4e6"/><rect x=".5" y="5.200" width="31" height="21.300" fill="#c7e6f8" stroke="#a3c4da"/><rect y="26" width="32" height="2" fill="#7fa5bc"/></g>
<g transform="translate(624,348)"><rect width="22" height="28" fill="url(#gBlue2)"/><rect x="22" y="7" width="6" height="21" fill="url(#gGreen)"/><path d="M15,7 L22,14 V7Z" fill="#000" opacity=".1"/><path d="M15,0 V7 H22Z" fill="#2b2f39"/><path d="M15,0 H22 V7Z" fill="#6fd40c"/><path d="M22,0 L28,7 H22Z" fill="#2b2f39"/><path d="M12,8.500 L15.800,12 L12,15.500" fill="none" stroke="#eef6fe" stroke-width="2.200"/><rect x="7" y="8" width="2" height="2" fill="#e4f1fd"/><rect x="5" y="14" width="2" height="2" fill="#cfe6fb"/><rect x="9" y="18" width="2" height="2" fill="#bcdcf9"/></g>
<circle cx="761.700" cy="362.400" r="8" fill="url(#gBri)" stroke="#080808" stroke-width="1.100"/><circle cx="761.500" cy="349.500" r="1.500" fill="#050505"/><circle cx="771.600" cy="352.500" r="1.500" fill="#151515"/><circle cx="773.600" cy="362.400" r="1.500" fill="#3a3a3a"/><circle cx="770.900" cy="370.500" r="1.500" fill="#5c5c5c"/><circle cx="762.300" cy="375.400" r="1.500" fill="#9a9a9a"/><circle cx="752.300" cy="371.500" r="1.500" fill="#d8d8d8" stroke="#b4b4b4" stroke-width=".6"/><circle cx="748.900" cy="362.900" r="1.500" fill="none" stroke="#d2d2d2" stroke-width=".7"/><circle cx="751.900" cy="353.600" r="1.500" fill="none" stroke="#e0e0e0" stroke-width=".7"/>
<g transform="translate(870,348)"><use href="#winicon"/><rect width="16" height="4" fill="#eff0f1"/><rect x="1.200" y="1.200" width="1.800" height="1.800" fill="#4d5157"/></g>
<g transform="translate(1010,361.8) scale(0.7)"><circle r="20" fill="url(#gGreen)"/><clipPath id="bc"><circle r="20"/></clipPath><path d="M1,-8 L4.5,-1.500 L24,18 L18,26 L-1,8Z" fill="#000" opacity=".08" clip-path="url(#bc)"/><path transform="scale(1.18)" d="M1,-8 L-4,1.700 H-0.400 L-1,8 L4.500,-1.500 H0.800Z" fill="#ffffff"/></g>
<g transform="translate(498,440) scale(1)"><use href="#deskimg"/><rect x="9" y="5" width="1.100" height="14" fill="#23262a"/><path d="M10.100,5.300 L16,8 V14.500 L10.100,15.500Z" fill="#eef3f5"/><path d="M16,9 L22,12 L16,15.300Z" fill="#e2e9ec"/><use href="#deskpanel"/></g>
<path d="M623,440 H651 V461 H644 V468 L637,461 H623Z" fill="url(#gBlue)"/><path d="M641,454 L651,461 H644 V468 L637,461 L634,454Z" fill="#000" opacity=".07"/><path d="M634,443 H648 V454 H643 V456.500 L640.500,454 H634Z" fill="url(#gBub)"/>
<g transform="translate(745,440)"><rect width="32" height="23" fill="#2a2d31"/><rect x="1" y="1.200" width="30" height="18" fill="url(#gScr)"/><rect x="13" y="23" width="6" height="4" fill="#d0d8dc"/><rect x="10" y="27" width="12" height="1" fill="#a2acb3"/></g>
<g transform="translate(869,445)"><rect width="32" height="18" fill="#e1e5e7"/><rect y="3" width="32" height="1" fill="#a9b1b6"/><rect y="17" width="32" height="1" fill="#a9b1b6"/><circle cx="24.5" cy="1.500" r=".6" fill="#1fc15f"/><circle cx="27.5" cy="1.500" r=".6" fill="#1fc15f"/><circle cx="30.5" cy="1.500" r=".6" fill="#1fc15f"/><rect x="1" y="5" width="3" height="3" fill="#1b1d1f"/><rect x="2.0" y="6" width="1" height="1" fill="#f2f2f2"/><rect x="5" y="5" width="3" height="3" fill="#1b1d1f"/><rect x="6.0" y="6" width="1" height="1" fill="#f2f2f2"/><rect x="9" y="5" width="3" height="3" fill="#1b1d1f"/><rect x="10.0" y="6" width="1" height="1" fill="#f2f2f2"/><rect x="13" y="5" width="3" height="3" fill="#1b1d1f"/><rect x="14.0" y="6" width="1" height="1" fill="#f2f2f2"/><rect x="17" y="5" width="3" height="3" fill="#1b1d1f"/><rect x="18.0" y="6" width="1" height="1" fill="#f2f2f2"/><rect x="21" y="5" width="3" height="3" fill="#1b1d1f"/><rect x="22.0" y="6" width="1" height="1" fill="#f2f2f2"/><rect x="25" y="5" width="6" height="3" fill="#1b1d1f"/><rect x="28.4" y="6" width="1" height="1" fill="#f2f2f2"/><rect x="1" y="9" width="5" height="3" fill="#1b1d1f"/><rect x="2" y="10" width="1" height="1" fill="#f2f2f2"/><rect x="7" y="9" width="3" height="3" fill="#1b1d1f"/><rect x="8.0" y="10" width="1" height="1" fill="#f2f2f2"/><rect x="11" y="9" width="3" height="3" fill="#1b1d1f"/><rect x="12.0" y="10" width="1" height="1" fill="#f2f2f2"/><rect x="15" y="9" width="3" height="3" fill="#1b1d1f"/><rect x="16.0" y="10" width="1" height="1" fill="#f2f2f2"/><rect x="19" y="9" width="3" height="3" fill="#1b1d1f"/><rect x="20.0" y="10" width="1" height="1" fill="#f2f2f2"/><rect x="23" y="9" width="3" height="3" fill="#1b1d1f"/><rect x="24.0" y="10" width="1" height="1" fill="#f2f2f2"/><rect x="27" y="9" width="4" height="3" fill="#1b1d1f"/><rect x="28.8" y="10" width="1" height="1" fill="#f2f2f2"/><rect x="1" y="13" width="3" height="3" fill="#1b1d1f"/><rect x="2.0" y="14" width="1" height="1" fill="#f2f2f2"/><rect x="5" y="13" width="3" height="3" fill="#1b1d1f"/><rect x="6.0" y="14" width="1" height="1" fill="#f2f2f2"/><rect x="9" y="13" width="10" height="3" fill="#1b1d1f"/><rect x="20" y="14.3" width="3" height="1.7" fill="#1b1d1f"/><rect x="24" y="13" width="3" height="3" fill="#1b1d1f"/><rect x="28" y="14.3" width="3" height="1.7" fill="#1b1d1f"/></g>
<g transform="translate(994,440) scale(1)"><use href="#deskimg"/><use href="#deskpanel"/></g>
<g fill="none" stroke="#45484b" stroke-width="1.400"><rect x="500.500" y="542.500" width="25" height="15"/><path d="M500.500,545.700 h25"/><path d="M512.500,542.500 C512.500,538 516.800,540.500 516.800,534.500"/></g><rect x="503" y="547.7" width="2.8" height="1.300" fill="#55585b"/><rect x="507.3" y="547.7" width="2.8" height="1.300" fill="#55585b"/><rect x="511.5" y="547.7" width="2.8" height="1.300" fill="#55585b"/><rect x="516" y="547.7" width="2.8" height="1.300" fill="#55585b"/><rect x="520.2" y="547.7" width="2.8" height="1.300" fill="#55585b"/><rect x="503" y="550.6" width="2.8" height="1.300" fill="#55585b"/><rect x="507.3" y="550.6" width="2.8" height="1.300" fill="#55585b"/><rect x="511.5" y="550.6" width="2.8" height="1.300" fill="#55585b"/><rect x="516" y="550.6" width="2.8" height="1.300" fill="#55585b"/><rect x="520.2" y="550.6" width="2.8" height="1.300" fill="#55585b"/><rect x="503" y="553.5" width="2.8" height="1.300" fill="#55585b"/><rect x="507.3" y="553.5" width="11.7" height="1.300" fill="#55585b"/><rect x="520.2" y="553.5" width="2.8" height="1.300" fill="#55585b"/>
<g transform="translate(622,532)"><use href="#winicon"/></g>
<g transform="translate(499.900,656.800) scale(1.020)"><use href="#toggle"/></g>
<g transform="translate(624,657)"><rect x="0" y="8.500" width="26" height="12.500" rx="1" fill="#dfe2e4"/><rect x="0" y="17" width="26" height="3.500" fill="#c6cbcf"/><rect x="0" y="9" width="2" height="11" fill="#2e343c"/><rect x="24" y="9" width="2" height="11" fill="#2e343c"/><rect x="24" y="18" width="2" height="2" fill="#1e8a2a"/><rect x="5" y=".5" width="16" height="10" fill="#f3f5f7"/><rect x="4" y="2" width="1" height="8.500" fill="#353d47"/><rect x="21" y="2" width="1" height="8.500" fill="#353d47"/><path d="M4,10 H22 V14.500 a1,1 0 0 1 -1,1 H5 a1,1 0 0 1 -1,-1Z" fill="#3a424e"/><path d="M12.300,13.400 l1.400,-1.400" stroke="#9aa3ad" stroke-width=".6"/><rect x="0" y="22" width="4" height=".8" fill="#555c64"/><rect x="22" y="22" width="4" height=".8" fill="#555c64"/><rect x="3.200" y="21" width=".9" height="3.500" fill="#2e343c"/><rect x="22" y="21" width=".9" height="3.500" fill="#2e343c"/><rect x="5" y="21" width="16" height="4" fill="url(#gRain)"/></g>
<circle cx="762" cy="670" r="12.300" fill="#dfe1e4"/><path d="M775,670 L766,676 H759 L770,680Z" fill="#000" opacity=".06"/><circle cx="762" cy="670" r="11.600" fill="none" stroke="#b4b8b4" stroke-width="1.600"/><path d="M762,658.400 A11.600,11.600 0 1 0 772.500,675" fill="none" stroke="#5fd20f" stroke-width="1.700"/><path d="M762,662.500 L768.200,669 H765 V676 H759 V669 H755.800Z" fill="url(#gGreen)"/>
<path d="M873.500,660 H896.500 L900.500,678.500 H869.500Z" fill="url(#gHd)" stroke="#c2c2c2" stroke-width=".6"/><ellipse cx="885" cy="670" rx="10" ry="6.500" fill="#e6e6e6" stroke="#d0d0d0" stroke-width=".6"/><path d="M869.500,678.500 H900.500 V682 a1,1 0 0 1 -1,1 H870.500 a1,1 0 0 1 -1,-1Z" fill="url(#gHf)"/><rect x="874" y="679.200" width="7" height="1.400" rx=".7" fill="#111"/><g fill="none" stroke="#f0680f" stroke-width="3"><path d="M876.300,659.200 A6,6 0 0 0 876.300,669.300" /><path d="M878,658.200 A6,6 0 0 1 884.700,660.500" /><path d="M885.300,667.500 A6,6 0 0 1 878,670.200"/></g><g fill="#f2730f"><circle cx="885" cy="655.900" r="1.900"/><circle cx="870.800" cy="664" r="1.900"/><circle cx="885" cy="672" r="1.900"/></g><path d="M881.300,665.500 C881.500,658.500 893,657 894.300,666.200 H896.800 L891.800,672 L886.800,666.200 H889.500 C889,662.500 884.500,662.500 884.200,665.800Z" fill="#a9d24c" stroke="#6fa321" stroke-width=".7"/>
<g transform="translate(996.500,656.700) scale(1.025)"><use href="#toggle"/></g>
<path d="M1137.500,325.700 L1142,321.200 L1146.500,325.700" fill="none" stroke="#9a9c9e" stroke-width="1.100"/><path d="M1137.500,714.500 L1142,719 L1146.500,714.500" fill="none" stroke="#2e3236" stroke-width="1.100"/></svg>
</div>
<div style="position:absolute;left:620px;top:425px;width:82px;height:30px;border:1px solid #b8b9ba;border-radius:3px;background:linear-gradient(#f7f7f8,#eaebec);box-shadow:0 1px 0 rgba(0,0,0,.12);text-align:center;line-height:30px">Chiudi</div>
</div></div>
<div id="menu">
<div class="t" style="left:23px;top:5px;">Accessori</div>
<div class="t" style="left:23px;top:31px;">Accesso universale</div>
<div class="t" style="left:23px;top:57px;">Altro</div>
<div class="t" style="left:23px;top:83px;">Audio e video</div>
<div class="t" style="left:23px;top:109px;">Giochi</div>
<div class="t" style="left:23px;top:135px;">Grafica</div>
<div class="t" style="left:23px;top:161px;">Internet</div>
<div class="t" style="left:23px;top:187px;">Istruzione</div>
<div class="t" style="left:23px;top:213px;">Programmazione</div>
<div class="t" style="left:23px;top:239px;">Strumenti di sistema</div>
<div class="t" style="left:23px;top:265px;">Ufficio</div>
<div class="t" style="left:23px;top:298px;">Preferenze</div>
<div class="t" style="left:23px;top:324px;">About LXQt</div>
<div class="t" style="left:23px;top:357px;">Esci</div>
<div class="t" style="left:23px;top:383px;">Blocca schermo</div>
<div class="sep" style="top:289px"></div>
<div class="sep" style="top:348px"></div>
<div class="sep" style="top:407px"></div>
<div style="position:absolute;left:0;top:412px;left:-1px;width:186px;height:27px;border:1px solid #3daee9;border-radius:2px;background:#fcfcfc"></div>
<div class="t" style="left:6px;top:418px;color:#a0a2a4">Cerca...</div>
<svg style="left:0px;top:-407px;width:1284px;height:880px" viewBox="0 0 1284 880"><path d="M170.500,415.9 L174.900,420 L170.500,424.1" fill="none" stroke="#2e3236" stroke-width="1.100"/>
<path d="M170.500,441.9 L174.900,446 L170.500,450.1" fill="none" stroke="#2e3236" stroke-width="1.100"/>
<path d="M170.500,467.9 L174.900,472 L170.500,476.1" fill="none" stroke="#2e3236" stroke-width="1.100"/>
<path d="M170.500,493.9 L174.900,498 L170.500,502.1" fill="none" stroke="#2e3236" stroke-width="1.100"/>
<path d="M170.500,519.9 L174.900,524 L170.500,528.1" fill="none" stroke="#2e3236" stroke-width="1.100"/>
<path d="M170.500,545.9 L174.900,550 L170.500,554.1" fill="none" stroke="#2e3236" stroke-width="1.100"/>
<path d="M170.500,571.9 L174.900,576 L170.500,580.1" fill="none" stroke="#2e3236" stroke-width="1.100"/>
<path d="M170.500,597.9 L174.900,602 L170.500,606.1" fill="none" stroke="#2e3236" stroke-width="1.100"/>
<path d="M170.500,623.9 L174.900,628 L170.500,632.1" fill="none" stroke="#2e3236" stroke-width="1.100"/>
<path d="M170.500,649.9 L174.900,654 L170.500,658.1" fill="none" stroke="#2e3236" stroke-width="1.100"/>
<path d="M170.500,675.9 L174.900,680 L170.500,684.1" fill="none" stroke="#2e3236" stroke-width="1.100"/>
<path d="M170.500,708.9 L174.900,713 L170.500,717.1" fill="none" stroke="#2e3236" stroke-width="1.100"/>
<path d="M170.500,767.9 L174.900,772 L170.500,776.1" fill="none" stroke="#2e3236" stroke-width="1.100"/>
<g transform="translate(9,445) scale(0.5)"><circle r="14" fill="url(#gBlue)"/><circle cx="1" cy="-6" r="1.100" fill="#fff"/><path d="M0.800,-4 V0.800 H3.600 L5,4.200" fill="none" stroke="#eaf5fe" stroke-width="1.600" stroke-linecap="round" stroke-linejoin="round"/><path d="M-1.200,-1.800 A3.900,3.900 0 1 0 3.600,4.200" fill="none" stroke="#fff" stroke-width=".9" stroke-linecap="round" opacity=".75"/></g>
<g fill="#424548"><rect x="2.700" y="465.900" width="12.600" height="1.600"/><rect x="2.700" y="470.300" width="12.600" height="1.600"/><rect x="2.700" y="474.700" width="12.600" height="1.600"/></g>
<g transform="translate(1,490.3) scale(0.5)"><rect width="32" height="23" fill="#1c1f22"/><rect x="1" y="1" width="30" height="16" fill="url(#gSky)"/><rect x="1" y="17" width="30" height="5.5" fill="#23272b"/><rect x="2" y="18.2" width="13" height="1" fill="#3daee9"/><circle cx="15" cy="18.7" r=".9" fill="#fff"/><circle cx="16" cy="8.8" r="5" fill="#23262a"/><path d="M14.3,6 L19,8.8 L14.3,11.6Z" fill="#fff"/><rect x="11" y="23" width="10" height="4" fill="#c9d3d8"/><rect x="9.5" y="27" width="13" height="1" fill="#9fb0b8"/></g>
<g transform="translate(2.5,518.8) scale(0.5)"><path d="M5,0 H21 C24,0 25,3 25.6,8 C26.2,12 26.5,16 24,16 C22,16 20.5,12 18,11.2 H8 C5.5,12 4,16 2,16 C-0.5,16 -0.2,12 0.4,8 C1,3 2,0 5,0Z" fill="#2b2f33"/><path d="M3.700,6 h5 M6.200,3.500 v5" stroke="#f4f4f4" stroke-width="1.700"/><circle cx="20" cy="3.6" r="1.05" fill="#2ecc50"/><circle cx="18" cy="5.8" r="1.05" fill="#e83e8c"/><circle cx="22" cy="5.8" r="1.05" fill="#e8412c"/><circle cx="20" cy="8" r="1.05" fill="#2d8ef0"/><circle cx="10" cy="10.6" r="1.2" fill="#c8c8c8"/><circle cx="16" cy="10.6" r="1.2" fill="#c8c8c8"/></g>
<g transform="translate(9,549) scale(0.5)"><path d="M-14,-14 H0 A14,14 0 1 1 -14,0Z" fill="#d4dadd"/><circle r="12" fill="url(#gGraf)"/><rect x="-12.8" y="-12.8" width="1.8" height="1.8" fill="#3d9df0"/></g>
<circle cx="9" cy="574.900" r="5.600" fill="none" stroke="#424548" stroke-width="1.100"/><path d="M10.300,573.500 L12,571.500 L14.200,572.500 L14.500,575.500 L13,578 L11.500,577 L11.500,575Z M5,575.500 L7.500,575 L9,577 L7.500,579.500 L5.500,578.500Z M4.300,572.300 L7,569.600 L8.600,570.200 L6,572.600Z" fill="#424548"/>
<g transform="translate(9,601) scale(0.5)"><circle r="14" fill="url(#gDark)"/><path d="M-2,-9 H2 V-2 L7,7.5 H-7 L-2,-2Z" fill="#e8ecee"/><path d="M-2.6,-9.4 h5.2" stroke="#fff" stroke-width="1.2"/><path d="M-3,1 H3 L6,7 H-6Z" fill="#3fc011"/><path d="M-4.5,4 H4.5 L6,7 H-6Z" fill="#2f9a0c"/><rect x="-14" y="7.5" width="28" height="1.6" fill="#e3a355"/></g>
<text transform="translate(4.600,631.300) scale(.62,1)" font-family="DejaVu Sans, Liberation Sans, sans-serif" font-size="12" fill="#7a7d80">{}</text>
<path d="M3,649 h12.500" stroke="#424548" stroke-width="1.100"/><circle cx="11.500" cy="649" r="1.900" fill="#424548"/><path d="M7.500,657 h8" stroke="#424548" stroke-width="1.100"/><circle cx="5.300" cy="657" r="1.700" fill="#eff0f1" stroke="#424548" stroke-width="1"/>
<g transform="translate(2,672)"><rect width="11" height="14" fill="url(#gBlue2)"/><rect x="11" y="3.500" width="3" height="10.500" fill="url(#gGreen)"/><path d="M7.500,0 V3.500 H11Z" fill="#2b2f39"/><path d="M7.500,0 H11 V3.500Z" fill="#6fd40c"/><path d="M11,0 L14,3.500 H11Z" fill="#2b2f39"/><path d="M3.500,4.500 h3 l1.500,1.500 v4 h-4.500Z" fill="none" stroke="#dceefd" stroke-width=".8"/></g>
<g transform="translate(1,705) scale(0.5)"><use href="#deskimg"/><path d="M9,8.500 h14" stroke="#f2fafa" stroke-width="1.500"/><circle cx="17.500" cy="8.500" r="2.300" fill="#e6f5f5"/><path d="M13.500,17.500 h9.500" stroke="#e8f2f4" stroke-width="1.500"/><use href="#deskpanel"/></g>
<circle cx="9" cy="738" r="5.800" fill="none" stroke="#424548" stroke-width="1.100"/><rect x="8.400" y="737" width="1.200" height="4" fill="#424548"/><rect x="8.400" y="734.800" width="1.200" height="1.200" fill="#424548"/>
<path d="M6.300,766 A5.800,5.800 0 1 0 11.700,766" fill="none" stroke="#424548" stroke-width="1.100"/><path d="M9,765 v6" stroke="#424548" stroke-width="1.100"/>
<circle cx="9" cy="797" r="5.800" fill="none" stroke="#424548" stroke-width="1.100"/><rect x="6.300" y="796.500" width="5.400" height="3.600" fill="none" stroke="#424548" stroke-width="1"/><path d="M7.300,796.500 v-1 a1.700,1.700 0 0 1 3.400,0 v1" fill="none" stroke="#424548" stroke-width="1"/></svg>
</div>
<div id="panel">
<div style="position:absolute;left:27px;top:2px;width:22px;height:29px;border:1px solid #79a6dc;border-radius:3.500px;background:linear-gradient(#f3f3f3,#e2e2e2);color:#555;text-align:center;line-height:29px;font-size:13.500px">1</div>
<div style="position:absolute;left:51px;top:2px;width:22px;height:29px;border:1px solid #bdbdbd;border-radius:3.500px;background:linear-gradient(#e2e2e2,#cbcbcb);color:#555;text-align:center;line-height:29px;font-size:13.500px">2</div>
<div style="position:absolute;left:81px;top:2px;width:130px;text-align:center;color:#575757;line-height:15px;font-size:13px;white-space:nowrap">Rilascia qui le icone<br>delle applicazioni</div>
<div style="position:absolute;left:220px;top:5px;width:399px;height:23px;border:1px solid #79a6dc;border-radius:3.500px;background:#f8f8f8"></div>
<div class="t" style="left:250px;top:9px;color:#111">Centro di configurazione</div>
<div class="t" style="left:652px;top:9px;color:#111">Applicazioni</div>
<div class="t" style="left:1215px;top:9px;color:#575757">16:12</div>
<svg style="left:0;top:-847px;width:1284px;height:880px" viewBox="0 0 1284 880">
<circle cx="11" cy="862.700" r="10.300" fill="url(#gLogo)"/><path d="M3.500,855.800 A10.300,10.300 0 0 1 19,856.200" fill="none" stroke="#1c2f44" stroke-width=".9" opacity=".8"/><path d="M.9,862 L13.200,855.300 C14.500,860 16,864.500 17.800,869.500 L16.300,871 L11,861.200 L4.200,870.300 L2.300,868.200 L5.500,863.500 L1,864Z" fill="#fff"/><path d="M1,863.600 L5,862.300 M2,868.500 L6.500,863 M4,870.300 L11,861 L16.500,871" fill="none" stroke="#1c2f44" stroke-width=".8"/>
<circle cx="79" cy="856" r="1.900" fill="#b9b9b9"/>
<circle cx="79" cy="861" r="1.900" fill="#b9b9b9"/>
<circle cx="79" cy="866" r="1.900" fill="#b9b9b9"/>
<circle cx="79" cy="871" r="1.900" fill="#b9b9b9"/>
<circle cx="216" cy="856" r="1.900" fill="#b9b9b9"/>
<circle cx="216" cy="861" r="1.900" fill="#b9b9b9"/>
<circle cx="216" cy="866" r="1.900" fill="#b9b9b9"/>
<circle cx="216" cy="871" r="1.900" fill="#b9b9b9"/>
<circle cx="1136" cy="856" r="1.900" fill="#b9b9b9"/>
<circle cx="1136" cy="861" r="1.900" fill="#b9b9b9"/>
<circle cx="1136" cy="866" r="1.900" fill="#b9b9b9"/>
<circle cx="1136" cy="871" r="1.900" fill="#b9b9b9"/>
<circle cx="1150" cy="856" r="1.900" fill="#b9b9b9"/>
<circle cx="1150" cy="861" r="1.900" fill="#b9b9b9"/>
<circle cx="1150" cy="866" r="1.900" fill="#b9b9b9"/>
<circle cx="1150" cy="871" r="1.900" fill="#b9b9b9"/>
<rect x="226" y="854" width="19" height="19" rx="2.500" fill="url(#gGearBg)"/><g transform="translate(235.500,863.500)"><path d="M0,-6.600 L1.500,-3.700 L4.670,-4.670 L3.700,-1.500 L6.600,0 L3.700,1.500 L4.670,4.670 L1.500,3.700 L0,6.600 L-1.500,3.700 L-4.670,4.670 L-3.700,1.500 L-6.600,0 L-3.700,-1.500 L-4.670,-4.670 L-1.500,-3.700Z" fill="#f2f2f2"/><circle r="2.400" fill="#4a4a4a"/></g>
<path d="M628,856 a1,1 0 0 1 1,-1 h6 l1.500,1.500 h10 a1,1 0 0 1 1,1 v14 a1,1 0 0 1 -1,1 h-17.500 a1,1 0 0 1 -1,-1Z" fill="#c9d9e6" stroke="#9fb4c6" stroke-width=".6"/><rect x="629.500" y="857.500" width="18" height="15" rx="1" fill="url(#gFold)"/>
<g fill="none" stroke="#3c3c3c" stroke-width="1.300"><rect x="1163.600" y="855.600" width="6.800" height="6"/><rect x="1162.600" y="861.600" width="8.800" height="8.600"/></g><rect x="1165.800" y="858" width="2.400" height="2.600" fill="#3c3c3c"/><rect x="1164.500" y="867" width="5" height="1.200" fill="#3c3c3c"/><rect x="1166" y="864" width="2" height="1" fill="#3c3c3c"/>
<path d="M1188,859.500 h2.200 v7.500 h-2.200Z M1191,859.500 L1197.500,854.700 V871.200 L1191,866.800Z" fill="#3f3f3f"/><path d="M1199.300,858.300 A6,6 0 0 1 1199.300,867.700" fill="none" stroke="#5a5a5a" stroke-width="1"/><path d="M1200.300,855.800 A8.500,8.500 0 0 1 1200.300,870.200" fill="none" stroke="#8a8a8a" stroke-width="1"/>
<rect x="1262.700" y="855.700" width="14.600" height="14.600" fill="none" stroke="#3c3c3c" stroke-width="1.300"/><path d="M1264.500,868 h11" stroke="#3c3c3c" stroke-width="1"/>
</svg>
</div>
</body></html>
